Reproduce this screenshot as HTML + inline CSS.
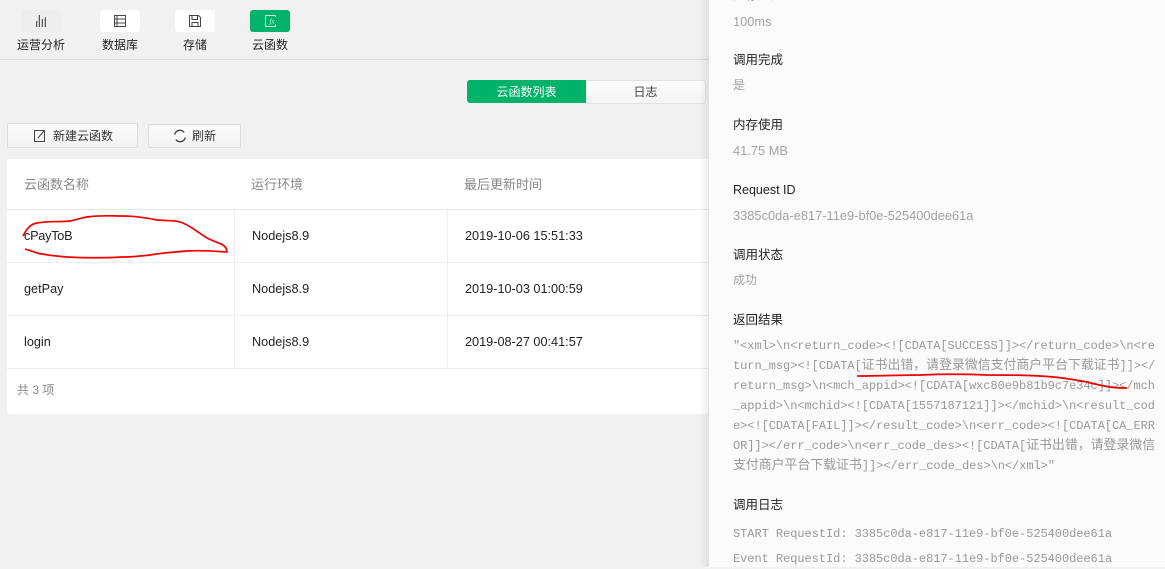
<!DOCTYPE html>
<html><head><meta charset="utf-8">
<style>
html,body{margin:0;padding:0}
body{width:1165px;height:567px;overflow:hidden;background:#f1f1f1;position:relative;font-family:"Liberation Sans","Noto Sans CJK SC",sans-serif;font-size:12px;color:#222}
.a{position:absolute;white-space:nowrap}
.ic{position:absolute;top:10px;width:40px;height:22px;border-radius:3px;background:#fff}
.nav{position:absolute;top:36px;font-size:12px;line-height:18px;text-align:center;color:#222;white-space:nowrap}
.btn{position:absolute;background:linear-gradient(#fbfbfb,#f4f4f4);border:1px solid #ddd;border-radius:2px;box-sizing:content-box}
.th{position:absolute;top:176px;font-size:13px;line-height:18px;color:#888;white-space:nowrap}
.td{position:absolute;font-size:12.7px;line-height:18px;color:#222;white-space:nowrap}
.hl{position:absolute;left:7px;width:701px;height:1px;background:#eee}
.vl{position:absolute;width:1px;background:#eee}
.lb{position:absolute;left:733px;font-size:12.5px;line-height:18px;color:#222;white-space:nowrap}
.vv{position:absolute;left:733px;font-size:12.85px;line-height:18px;color:#a3a3a3;white-space:nowrap}
.mono{font-family:"Liberation Mono","Noto Sans CJK SC",monospace;font-size:12px;letter-spacing:-.05px;color:#999;white-space:pre;position:absolute;left:733px;line-height:20px}
.mono span{font-family:"Noto Sans CJK SC",sans-serif;font-size:12.9px;letter-spacing:0;line-height:0}
</style></head><body>

<div class="ic" style="left:21px;background:#eeeeee"></div>
<svg class="a" style="left:35px;top:14px" width="13" height="14" viewBox="0 0 13 14"><path d="M1.700 7V13M4.300 1V13M7.300 5V13M10.300 3.300V13" stroke="#333" stroke-width="1" fill="none"/></svg>
<div class="ic" style="left:100px"></div>
<svg class="a" style="left:113px;top:14px" width="14" height="14" viewBox="0 0 14 14"><path d="M1.500 1.500H12.500V12.500H1.500ZM1.500 5H12.500M1.500 9H12.500M4 1.500V12.500" stroke="#444" stroke-width="1" fill="none"/></svg>
<div class="ic" style="left:175px"></div>
<svg class="a" style="left:188px;top:14px" width="14" height="14" viewBox="0 0 14 14"><path d="M1.500 1.500H10.500L12.500 3.500V12.500H1.500ZM4 1.500V5.500H9.500V1.500M4 12.500V8.500H10V12.500" stroke="#444" stroke-width="1" fill="none"/></svg>
<div class="ic" style="left:250px;background:#00b26a"></div>
<svg class="a" style="left:264px;top:14px" width="13" height="14" viewBox="0 0 13 14"><path d="M11.500 1.500H1.500V12.500H11.500V10.500M11.500 3V1.500" stroke="#d5f3e6" stroke-width="1" fill="none"/><text x="5.500" y="9.500" font-size="7" font-style="italic" fill="#d5f3e6" font-family="Liberation Serif">fx</text></svg>

<div class="nav" style="left:17px;width:48px">运营分析</div>
<div class="nav" style="left:102px;width:36px">数据库</div>
<div class="nav" style="left:183px;width:24px">存储</div>
<div class="nav" style="left:252px;width:36px">云函数</div>
<div class="a" style="left:0;top:59px;width:709px;height:1px;background:#d9d9d9"></div>

<div class="a" style="left:467px;top:80px;width:119px;height:23px;background:#00b26a;border-radius:3px 0 0 3px;color:#fff;font-size:12px;line-height:24px;text-align:center">云函数列表</div>
<div class="a" style="left:586px;top:80px;width:119px;height:22px;background:linear-gradient(#fcfcfc,#f5f5f5);border:1px solid #e2e2e2;border-left:0;border-radius:0 3px 3px 0;color:#444;font-size:12px;line-height:23px;text-align:center">日志</div>

<div class="btn" style="left:7px;top:123px;width:129px;height:23px"></div>
<svg class="a" style="left:33px;top:129px" width="13" height="14" viewBox="0 0 13 14"><path d="M1.500 1.500H11.500V12.500H1.500ZM11 2L5 9" stroke="#444" stroke-width="1" fill="none"/></svg>
<div class="a" style="left:53px;top:127px;font-size:12px;line-height:18px;color:#333">新建云函数</div>
<div class="btn" style="left:148px;top:124px;width:91px;height:22px"></div>
<svg class="a" style="left:173px;top:129px" width="14" height="14" viewBox="0 0 14 14"><path d="M1.700 5.500A5.300 5.300 0 0 1 11 3.300M12.300 8.500A5.300 5.300 0 0 1 3 10.700" stroke="#444" stroke-width="1.400" fill="none"/></svg>
<div class="a" style="left:192px;top:127px;font-size:12px;line-height:18px;color:#333">刷新</div>

<div class="a" style="left:7px;top:159px;width:701px;height:255px;background:#fff;border-radius:0 0 3px 3px"></div>
<div class="th" style="left:24px">云函数名称</div>
<div class="th" style="left:251px">运行环境</div>
<div class="th" style="left:464px">最后更新时间</div>
<div class="hl" style="top:209px;background:#e6e6e6"></div>
<div class="hl" style="top:262px"></div>
<div class="hl" style="top:315px"></div>
<div class="hl" style="top:368px"></div>
<div class="vl" style="left:234px;top:210px;height:158px"></div>
<div class="vl" style="left:447px;top:210px;height:158px"></div>

<div class="td" style="left:24px;top:227px;letter-spacing:-.25px">cPayToB</div>
<div class="td" style="left:252px;top:227px">Nodejs8.9</div>
<div class="td" style="left:465px;top:227px">2019-10-06 15:51:33</div>
<div class="td" style="left:24px;top:280px">getPay</div>
<div class="td" style="left:252px;top:280px">Nodejs8.9</div>
<div class="td" style="left:465px;top:280px">2019-10-03 01:00:59</div>
<div class="td" style="left:24px;top:333px">login</div>
<div class="td" style="left:252px;top:333px">Nodejs8.9</div>
<div class="td" style="left:465px;top:333px">2019-08-27 00:41:57</div>
<div class="a" style="left:17px;top:381px;font-size:12px;line-height:18px;color:#888">共 3 项</div>

<div class="a" style="left:699px;top:0;width:10px;height:567px;background:linear-gradient(90deg,rgba(0,0,0,0),rgba(0,0,0,.07))"></div>
<div class="a" style="left:709px;top:0;width:456px;height:567px;background:#fbfbfb"></div>

<div class="lb" style="top:-14px">内存分配</div>
<div class="vv" style="top:13px">100ms</div>
<div class="lb" style="top:51px">调用完成</div>
<div class="vv" style="top:76px;font-size:12px">是</div>
<div class="lb" style="top:116px">内存使用</div>
<div class="vv" style="top:142px">41.75 MB</div>
<div class="lb" style="top:181px">Request ID</div>
<div class="vv" style="top:207px">3385c0da-e817-11e9-bf0e-525400dee61a</div>
<div class="lb" style="top:246px">调用状态</div>
<div class="vv" style="top:271px;font-size:12px">成功</div>
<div class="lb" style="top:311px">返回结果</div>
<div class="mono" style="top:336px">"&lt;xml&gt;\n&lt;return_code&gt;&lt;![CDATA[SUCCESS]]&gt;&lt;/return_code&gt;\n&lt;re
turn_msg&gt;&lt;![CDATA[<span>证书出错，请登录微信支付商户平台下载证书</span>]]&gt;&lt;/
return_msg&gt;\n&lt;mch_appid&gt;&lt;![CDATA[wxc80e9b81b9c7e34c]]&gt;&lt;/mch
_appid&gt;\n&lt;mchid&gt;&lt;![CDATA[1557187121]]&gt;&lt;/mchid&gt;\n&lt;result_cod
e&gt;&lt;![CDATA[FAIL]]&gt;&lt;/result_code&gt;\n&lt;err_code&gt;&lt;![CDATA[CA_ERR
OR]]&gt;&lt;/err_code&gt;\n&lt;err_code_des&gt;&lt;![CDATA[<span>证书出错，请登录微信</span>
<span>支付商户平台下载证书</span>]]&gt;&lt;/err_code_des&gt;\n&lt;/xml&gt;"</div>
<div class="lb" style="top:496px">调用日志</div>
<div class="mono" style="top:524px">START RequestId: 3385c0da-e817-11e9-bf0e-525400dee61a</div>
<div class="mono" style="top:549px">Event RequestId: 3385c0da-e817-11e9-bf0e-525400dee61a</div>

<svg class="a" style="left:0;top:0" width="1165" height="567" viewBox="0 0 1165 567">
<path d="M23 236C27 228 31 224 37 223C48 221 60 222 70 221C76 220 80 218 87 217C100 215 112 216 123 216C136 216 147 218 157 220C168 221 176 220 183 223C192 227 199 233 207 238C213 241 219 243 223 245C226 247 227 249 227 252C213 251 200 250 187 251C173 252 162 253 150 255C140 256 132 257 123 257C104 258 85 258 67 257C55 256 46 255 37 253C32 251 28 250 25 249" stroke="#f00000" stroke-width="1.700" fill="none"/>
<path d="M857 376C878 376 900 375 920 375C943 374 965 374 987 375C1010 375 1032 375 1053 377C1065 378 1076 380 1087 382C1095 384 1103 386 1110 387C1116 388 1122 388 1127 388" stroke="#f00000" stroke-width="1.700" fill="none"/>
</svg>
</body></html>
